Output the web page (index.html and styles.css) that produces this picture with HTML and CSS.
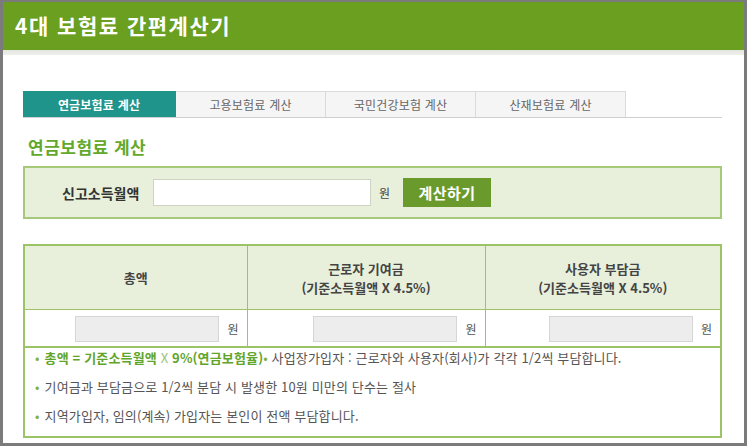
FILE: index.html
```html
<!DOCTYPE html>
<html lang="ko">
<head>
    <meta charset="UTF-8">
    <meta name="viewport" content="width=device-width, initial-scale=1.0">
    <title>4대 보험료 간편계산기</title>
    <link rel="stylesheet" href="styles.css">
</head>
<body>
    <div class="frame">
        <div class="header">4대 보험료 간편계산기</div>
        <div class="header-shadow"></div>

        <div class="content">
            <ul class="tabs">
                <li class="tab active">연금보험료 계산</li>
                <li class="tab">고용보험료 계산</li>
                <li class="tab">국민건강보험 계산</li>
                <li class="tab">산재보험료 계산</li>
            </ul>

            <h2 class="section-title">연금보험료 계산</h2>

            <div class="input-box">
                <label class="input-label" for="income">신고소득월액</label>
                <input class="income-input" id="income" type="text">
                <span class="unit">원</span>
                <button class="calc-btn" type="button">계산하기</button>
            </div>

            <table class="result">
                <colgroup>
                    <col class="c1">
                    <col class="c2">
                    <col>
                </colgroup>
                <tr class="head-row">
                    <th>총액</th>
                    <th>근로자 기여금<br>(기준소득월액 X 4.5%)</th>
                    <th>사용자 부담금<br>(기준소득월액 X 4.5%)</th>
                </tr>
                <tr class="value-row">
                    <td><span class="out"></span><span class="unit">원</span></td>
                    <td><span class="out"></span><span class="unit">원</span></td>
                    <td><span class="out"></span><span class="unit">원</span></td>
                </tr>
                <tr class="notes-row">
                    <td colspan="3">
                        <ul class="notes">
                            <li><span class="hl">총액 = 기준소득월액 <span class="x">X</span> 9%(연금보험율)</span><span class="dot">•</span> 사업장가입자 : 근로자와 사용자(회사)가 각각 1/2씩 부담합니다.</li>
                            <li>기여금과 부담금으로 1/2씩 분담 시 발생한 10원 미만의 단수는 절사</li>
                            <li>지역가입자, 임의(계속) 가입자는 본인이 전액 부담합니다.</li>
                        </ul>
                    </td>
                </tr>
            </table>
        </div>
    </div>
</body>
</html>
```

FILE: styles.css
```css
html, body {
    margin: 0;
    padding: 0;
}

body {
    width: 747px;
    height: 446px;
    background: #7b7b7b;
    font-family: "Noto Sans CJK KR", "Noto Sans", sans-serif;
    color: #444;
    overflow: hidden;
}

.frame {
    margin: 2px 3px 0 3px;
    width: 741px;
    height: 441px;
    background: #fff;
    display: flex;
    flex-direction: column;
}

.header {
    height: 48px;
    background: #6a9f1f;
    color: #fff;
    font-size: 21px;
    font-weight: bold;
    line-height: 46px;
    padding-left: 12px;
    letter-spacing: 1.5px;
}

.header-shadow {
    height: 5px;
    background: linear-gradient(#e4e6df, #eeefec);
}

.content {
    padding: 36px 22px 0 20px;
}

/* tabs */
.tabs {
    list-style: none;
    margin: 0;
    padding: 0;
    display: flex;
    height: 26px;
    border-bottom: 1px solid #cfcfcf;
}

.tab {
    width: 150px;
    box-sizing: border-box;
    border: 1px solid #dadada;
    border-bottom: none;
    border-left: none;
    background: #f5f5f5;
    color: #666;
    font-size: 12px;
    text-align: center;
    line-height: 25px;
    letter-spacing: 0.2px;
}

.tab.active {
    width: 153px;
    background: #1f948a;
    border-color: #1f948a;
    color: #fff;
    font-weight: bold;
}

.section-title {
    margin: 17px 0 0 5px;
    font-size: 17px;
    color: #62a82b;
    font-weight: bold;
    height: 24px;
    line-height: 24px;
    letter-spacing: 0.5px;
}

/* income input */
.input-box {
    margin-top: 7px;
    height: 49px;
    background: #e8f0dc;
    border: 2px solid #a6c879;
    display: flex;
    align-items: center;
}

.input-label {
    width: 128px;
    padding-left: 37px;
    box-sizing: border-box;
    font-size: 14px;
    font-weight: bold;
    color: #333;
}

.income-input {
    width: 218px;
    height: 27px;
    box-sizing: border-box;
    border: 1px solid #cdd3c5;
    background: #fff;
    margin: 0;
}

.input-box .unit {
    margin-left: 8px;
    font-size: 12px;
    color: #444;
}

.calc-btn {
    margin-left: 13px;
    width: 88px;
    height: 29px;
    border: none;
    background: #6a9a2c;
    color: #fff;
    font-family: inherit;
    font-size: 15px;
    font-weight: bold;
    padding: 0;
    letter-spacing: 0.5px;
}

/* result table */
.result {
    margin-top: 25px;
    width: 699px;
    table-layout: fixed;
    border-collapse: collapse;
    border: 2px solid #9cc466;
}

.result .c1 { width: 223px; }
.result .c2 { width: 238px; }

.head-row th {
    height: 61px;
    background: #e8f0dc;
    border: 1px solid #9cc466;
    font-size: 13px;
    font-weight: bold;
    color: #444;
    line-height: 19px;
}

.value-row td {
    height: 36px;
    border: 1px solid #9cc466;
    border-bottom-width: 2px;
    text-align: right;
    padding: 0 8px 0 0;
    white-space: nowrap;
}

.out {
    display: inline-block;
    vertical-align: middle;
    width: 144px;
    height: 26px;
    box-sizing: border-box;
    background: #ededed;
    border: 1px solid #d6d6d6;
}

.value-row .unit {
    display: inline-block;
    vertical-align: middle;
    margin-left: 8px;
    font-size: 12px;
    color: #555;
}

.notes-row td {
    height: 88px;
    padding: 0;
    vertical-align: top;
}

.notes {
    list-style: none;
    margin: 0;
    padding: 1px 0 0 10px;
}

.notes li {
    font-size: 13px;
    color: #555;
    line-height: 17px;
    margin-bottom: 12px;
    letter-spacing: 0.15px;
}

.notes li::before,
.notes .dot {
    content: "•";
    color: #7fb043;
    margin-right: 5px;
}

.notes .dot {
    margin-right: 0;
}

.notes .hl {
    color: #5fa52a;
    font-weight: bold;
}

.notes .x {
    color: #9ac37c;
    font-weight: normal;
}
```
